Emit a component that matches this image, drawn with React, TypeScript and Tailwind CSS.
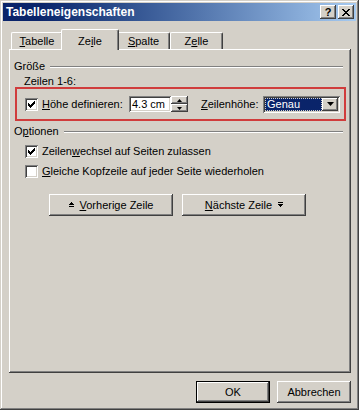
import React from "react";

const raised =
  "shadow-[inset_-1px_-1px_#404040,inset_1px_1px_#ffffff,inset_-2px_-2px_#808080]";
const sunken =
  "shadow-[inset_1px_1px_#808080,inset_-1px_-1px_#ffffff,inset_2px_2px_#404040,inset_-2px_-2px_#d4d0c8]";

const U = ({ children }: { children: React.ReactNode }) => (
  <span className="underline decoration-1 underline-offset-[1px]">{children}</span>
);

const Check = ({ checked }: { checked?: boolean }) => (
  <span className={`flex h-[13px] w-[13px] shrink-0 items-center justify-center bg-white ${sunken}`}>
    {checked && (
      <svg width="7" height="7" viewBox="0 0 7 7" shapeRendering="crispEdges">
        <path
          fill="#000"
          d="M0 2h1v3H0zM1 3h1v3H1zM2 4h1v3H2zM3 3h1v3H3zM4 2h1v3H4zM5 1h1v3H5zM6 0h1v3H6z"
        />
      </svg>
    )}
  </span>
);

const GroupTitle = ({ children }: { children: React.ReactNode }) => (
  <div className="flex h-[13px] items-center pl-[5px] leading-[13px]">
    <span>{children}</span>
    <span className="ml-[5px] mr-[8px] h-[2px] flex-1 border-t border-b border-t-[#808080] border-b-white" />
  </div>
);

const Tab = ({ children, w }: { children: React.ReactNode; w: string }) => (
  <div
    className={`${w} mb-[1px] flex h-[17px] items-center justify-center rounded-t-[2px] border-t border-l border-r border-t-white border-l-white border-r-[#404040] shadow-[inset_-1px_0_#808080]`}
  >
    {children}
  </div>
);

export default function App() {
  return (
    <div className="h-[410px] w-[359px] bg-[#d4d0c8] p-[3px] font-['Liberation_Sans',Arial,sans-serif] text-[11px] text-black shadow-[inset_-1px_-1px_#404040,inset_1px_1px_#d4d0c8,inset_-2px_-2px_#808080,inset_2px_2px_#ffffff]">
      {/* title bar */}
      <div className="flex h-[18px] items-center bg-linear-to-r from-[#0a246a] from-10% to-[#a6caf0] pl-[3px] pr-[2px]">
        <span className="text-[12px] font-bold text-white">Tabelleneigenschaften</span>
        <div className="ml-auto flex gap-[2px]">
          <div className={`flex h-[14px] w-[16px] items-center justify-center bg-[#d4d0c8] text-[11px] font-bold leading-none ${raised}`}>
            ?
          </div>
          <div className={`flex h-[14px] w-[16px] items-center justify-center bg-[#d4d0c8] ${raised}`}>
            <svg width="8" height="7" viewBox="0 0 8 7" shapeRendering="crispEdges">
              <path
                fill="#000"
                d="M0 0h2v1H0zM1 1h2v1H1zM2 2h2v1H2zM3 3h2v1H3zM2 4h2v1H2zM1 5h2v1H1zM0 6h2v1H0zM6 0h2v1H6zM5 1h2v1H5zM4 2h2v1H4zM4 4h2v1H4zM5 5h2v1H5zM6 6h2v1H6z"
              />
            </svg>
          </div>
        </div>
      </div>

      <div className="pl-[6px] pt-[8px]">
        {/* tabs */}
        <div className="flex h-[21px] items-end pl-[2px]">
          <Tab w="w-[52px]">
            <span>
              <U>T</U>abelle
            </span>
          </Tab>
          <div className="relative z-10 -ml-[2px] flex h-[21px] w-[58px] items-start justify-center rounded-t-[2px] border-t border-l border-r border-t-white border-l-white border-r-[#404040] bg-[#d4d0c8] pt-[3px] shadow-[inset_-1px_0_#808080]">
            <span>
              Ze<U>i</U>le
            </span>
          </div>
          <Tab w="w-[53px] -ml-[2px]">
            <span>
              <U>S</U>palte
            </span>
          </Tab>
          <Tab w="w-[53px]">
            <span>
              Z<U>e</U>lle
            </span>
          </Tab>
        </div>

        {/* panel */}
        <div className={`-mt-[1px] h-[324px] w-[342px] ${raised}`}>
          <div className="pt-[11px]">
            <GroupTitle>Größe</GroupTitle>
          </div>
          <div className="mt-[2px] h-[12px] pl-[15px] leading-[13px]">Zeilen 1-6:</div>

          <div className="ml-[6px] flex h-[34px] w-[331px] items-center border-2 border-[#d03c3c] pl-[8px]">
            <Check checked />
            <span className="ml-[4px] w-[87px]">
              <U>H</U>öhe definieren:
            </span>
            <div className={`flex h-[16px] w-[42px] items-center bg-white pl-[3px] ${sunken}`}>4.3 cm</div>
            <div className="flex h-[16px] w-[17px] flex-col">
              <div className={`flex h-[8px] items-center justify-center bg-[#d4d0c8] ${raised}`}>
                <svg width="5" height="3" viewBox="0 0 5 3">
                  <path fill="#000" d="M2.5 0L5 3H0z" />
                </svg>
              </div>
              <div className={`flex h-[8px] items-center justify-center bg-[#d4d0c8] ${raised}`}>
                <svg width="5" height="3" viewBox="0 0 5 3">
                  <path fill="#000" d="M0 0h5L2.5 3z" />
                </svg>
              </div>
            </div>
            <span className="ml-[13px] w-[62px]">
              <U>Z</U>eilenhöhe:
            </span>
            <div className={`flex h-[17px] w-[77px] items-center bg-white p-[2px] ${sunken}`}>
              <div className="flex h-[13px] flex-1 items-center border border-dotted border-[#d4d0c8] bg-[#0a246a] pl-[1px] text-white">
                Genau
              </div>
              <div className={`flex h-[13px] w-[16px] items-center justify-center bg-[#d4d0c8] ${raised}`}>
                <svg width="7" height="4" viewBox="0 0 7 4">
                  <path fill="#000" d="M0 0h7L3.5 4z" />
                </svg>
              </div>
            </div>
          </div>

          <div className="mt-[4px]">
            <GroupTitle>
              O<U>p</U>tionen
            </GroupTitle>
          </div>

          <div className="mt-[7px] flex h-[13px] items-center pl-[16px]">
            <Check checked />
            <span className="ml-[4px]">
              Zeilen<U>w</U>echsel auf Seiten zulassen
            </span>
          </div>
          <div className="mt-[7px] flex h-[13px] items-center pl-[16px]">
            <Check />
            <span className="ml-[4px]">
              <U>G</U>leiche Kopfzeile auf jeder Seite wiederholen
            </span>
          </div>

          <div className="mt-[16px] flex gap-[9px] pl-[40px]">
            <button className={`flex h-[22px] w-[124px] items-center justify-center gap-[6px] bg-[#d4d0c8] ${raised}`}>
              <svg width="5" height="6" viewBox="0 0 5 6" shapeRendering="crispEdges">
                <path fill="#000" d="M2 0h1v1H2zM1 1h3v1H1zM0 2h5v1H0zM0 4h5v1H0z" />
              </svg>
              <span>
                <U>V</U>orherige Zeile
              </span>
            </button>
            <button className={`flex h-[22px] w-[124px] items-center justify-center gap-[6px] bg-[#d4d0c8] ${raised}`}>
              <span>
                <U>N</U>ächste Zeile
              </span>
              <svg width="5" height="6" viewBox="0 0 5 6" shapeRendering="crispEdges">
                <path fill="#000" d="M0 0h5v1H0zM0 2h5v1H0zM1 3h3v1H1zM2 4h1v1H2z" />
              </svg>
            </button>
          </div>
        </div>

        {/* dialog buttons */}
        <div className="mt-[8px] flex w-[342px] justify-end gap-[7px]">
          <button className="h-[22px] w-[74px] border border-black bg-[#d4d0c8] shadow-[inset_-1px_-1px_#404040,inset_1px_1px_#ffffff,inset_-2px_-2px_#808080]">
            OK
          </button>
          <button className={`h-[22px] w-[74px] bg-[#d4d0c8] ${raised}`}>Abbrechen</button>
        </div>
      </div>
    </div>
  );
}
